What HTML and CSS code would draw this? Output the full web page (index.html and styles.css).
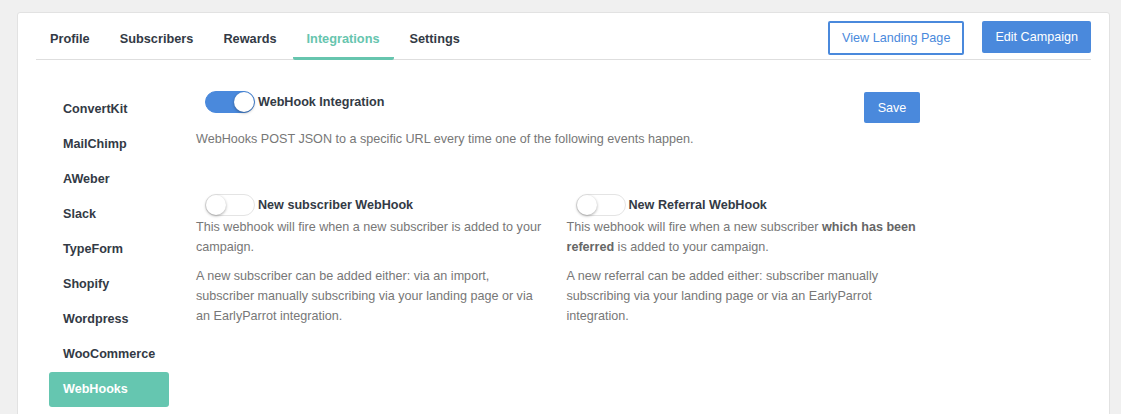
FILE: index.html
```html
<!DOCTYPE html>
<html lang="en">
<head>
  <meta charset="UTF-8">
  <title>Integrations - WebHooks</title>
  <link rel="stylesheet" href="styles.css">
</head>
<body>

<div class="card">
  <!-- Top tabs -->
  <div class="topbar">
    <ul class="tabs">
      <li>Profile</li>
      <li>Subscribers</li>
      <li>Rewards</li>
      <li class="active">Integrations</li>
      <li>Settings</li>
    </ul>
    <div class="top-actions">
      <button class="btn-outline">View Landing Page</button>
      <button class="btn-primary">Edit Campaign</button>
    </div>
  </div>

  <div class="body">
    <!-- Integration list -->
    <ul class="sidebar">
      <li>ConvertKit</li>
      <li>MailChimp</li>
      <li>AWeber</li>
      <li>Slack</li>
      <li>TypeForm</li>
      <li>Shopify</li>
      <li>Wordpress</li>
      <li>WooCommerce</li>
      <li class="active">WebHooks</li>
    </ul>

    <!-- WebHook settings -->
    <div class="content">
      <div class="head-row">
        <div class="switch-row">
          <span class="switch on"></span>
          <span class="switch-label">WebHook Integration</span>
        </div>
        <button class="btn-primary btn-save">Save</button>
      </div>
      <p class="intro">WebHooks POST JSON to a specific URL every time one of the following events happen.</p>

      <div class="hooks">
        <div class="hook">
          <div class="switch-row">
            <span class="switch"></span>
            <span class="switch-label">New subscriber WebHook</span>
          </div>
          <p>This webhook will fire when a new subscriber is added to your campaign.</p>
          <p>A new subscriber can be added either: via an import, subscriber manually subscribing via your landing page or via an EarlyParrot integration.</p>
        </div>
        <div class="hook">
          <div class="switch-row">
            <span class="switch"></span>
            <span class="switch-label">New Referral WebHook</span>
          </div>
          <p>This webhook will fire when a new subscriber <b>which has been referred</b> is added to your campaign.</p>
          <p>A new referral can be added either: subscriber manually subscribing via your landing page or via an EarlyParrot integration.</p>
        </div>
      </div>
    </div>
  </div>
</div>

</body>
</html>
```

FILE: styles.css
```css
/* Basic Styles */
body {
  margin: 0;
  background-color: #f0f0f0;
  font-family: "Liberation Sans", Arial, sans-serif;
  font-size: 12.6px;
  color: #333a45;
}
ul {
  list-style: none;
  margin: 0;
  padding: 0;
}
button {
  font-family: inherit;
  font-size: 12.6px;
  cursor: pointer;
}
.card {
  margin: 12px 11px 0 17px;
  padding: 0 18px;
  height: 420px;
  background-color: #fff;
  border: 1px solid #e2e2e2;
  border-radius: 3px;
}

/* Top bar */
.topbar {
  display: flex;
  justify-content: space-between;
  border-bottom: 1px solid #dedede;
}
.tabs {
  display: flex;
  gap: 2px;
}
.tabs li {
  padding: 18px 14px 10px;
  line-height: 16px;
  font-size: 12.75px;
  font-weight: bold;
  border-bottom: 3px solid transparent;
  border-radius: 2px;
  margin-bottom: -1px;
}
.tabs li.active {
  color: #66c5ae;
  border-bottom-color: #66c5ae;
}
.top-actions {
  display: flex;
  align-items: flex-start;
  gap: 18px;
  padding-top: 8px;
}
.btn-outline {
  height: 34px;
  padding: 0 12px;
  background-color: #fff;
  color: #4a89dc;
  border: 2px solid #4a89dc;
  border-radius: 2px;
}
.btn-primary {
  height: 32px;
  padding: 0 13px;
  background-color: #4a89dc;
  color: #fff;
  border: none;
  border-radius: 2px;
}

/* Body */
.body {
  display: flex;
  padding-top: 31px;
}
.sidebar {
  width: 120px;
  margin-top: 1px;
  margin-left: 13px;
  flex-shrink: 0;
}
.sidebar li {
  height: 35px;
  line-height: 35px;
  padding-left: 14px;
  font-weight: bold;
  border-radius: 3px;
}
.sidebar li.active {
  background-color: #65c6b0;
  color: #fff;
}
.content {
  width: 724px;
  margin-left: 27px;
}
.head-row {
  display: flex;
  justify-content: space-between;
  align-items: flex-start;
}
.btn-save {
  height: 31px;
  width: 56px;
  margin-top: 1px;
  padding: 0;
}
.switch-row {
  display: flex;
  align-items: center;
  gap: 3px;
  padding-left: 9px;
  height: 22px;
}
.switch-label {
  font-weight: bold;
}
.switch {
  position: relative;
  box-sizing: border-box;
  width: 50px;
  height: 22px;
  border: 1px solid #e4e4e4;
  border-radius: 11px;
  background-color: #fff;
}
.switch::after {
  content: "";
  position: absolute;
  top: 0;
  left: 0;
  width: 20px;
  height: 20px;
  border-radius: 50%;
  background-color: #fff;
  box-shadow: 0 1px 3px rgba(0, 0, 0, 0.35);
}
.switch.on {
  background-color: #4a89dc;
  border-color: #4a89dc;
}
.switch.on::after {
  left: auto;
  right: 0;
}
.content p {
  margin: 0;
  line-height: 20px;
  color: #777;
}
.intro {
  margin-top: 6px !important;
}
.hooks {
  display: grid;
  grid-template-columns: 1fr 1fr;
  column-gap: 17px;
  margin-top: 45px;
}
.hook p {
  margin-bottom: 9px !important;
}
.hook p b {
  color: #666;
}
.hook .switch-row {
  margin-bottom: 1px;
}
```
